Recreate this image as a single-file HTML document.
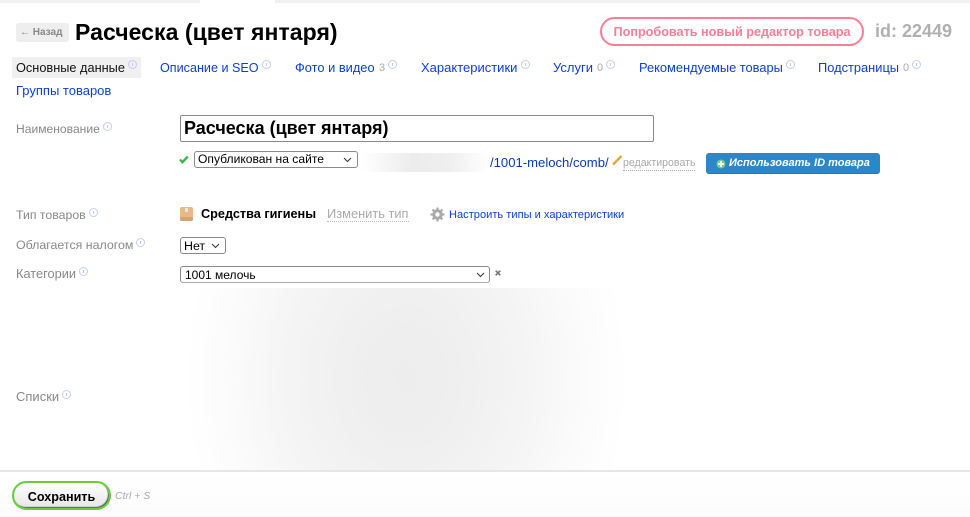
<!DOCTYPE html>
<html lang="ru"><head><meta charset="utf-8"><title>Расческа</title>
<style>
html,body{margin:0;padding:0;background:#fff}
body{width:970px;height:517px;position:relative;overflow:hidden;font-family:"Liberation Sans","Noto Sans CJK SC",sans-serif;color:#000}
.a{position:absolute;white-space:nowrap}
.l{font-size:12.4px;color:#888;line-height:16px}
.t{font-size:12.85px;color:#0b3fd0;line-height:16px}
.n{font-size:11px;color:#aaa;line-height:14px}
.i{position:absolute;border:1px solid #c3cdef;border-radius:50%;box-sizing:border-box;width:9px;height:9px}
.i:after{content:"";position:absolute;left:3px;top:2px;width:1px;height:3px;background:#c3cdef}
.s{position:absolute;box-sizing:border-box;background:#fff;border:1px solid #8a8a8a;border-radius:3px;font-size:12.1px;line-height:16px;white-space:nowrap}
.s svg{position:absolute}
</style></head><body>
<div class="a" style="left:0;top:0;width:970px;height:3px;background:#f0f0f0"></div>
<div class="a" style="left:200px;top:0;width:75px;height:3px;background:#fff"></div>

<div class="a" style="left:16px;top:23px;width:53px;height:19px;background:#eee;border-radius:3px;font-size:10px;font-weight:bold;color:#888;line-height:20px;text-indent:4px"><span style="font-weight:normal">←</span> Назад</div>
<div class="a" style="left:75px;top:17px;font-size:23px;letter-spacing:.06px;font-weight:bold;line-height:30px">Расческа (цвет янтаря)</div>

<div class="a" style="left:600px;top:17px;width:264px;height:29px;box-sizing:border-box;border:2px solid #fb7d96;border-radius:15px;color:#fb7d96;font-size:12.65px;font-weight:bold;line-height:27px;text-align:center">Попробовать новый редактор товара</div>
<div class="a" style="left:875px;top:20px;font-size:18px;font-weight:bold;color:#b0b0b0;line-height:22px">id: 22449</div>

<div class="a" style="left:12px;top:57px;width:129px;height:21px;background:#f0f0f0"></div>
<div class="a" style="left:16px;top:60px;font-size:12.75px;line-height:16px;color:#111">Основные данные</div><i class="i" style="left:128px;top:60px"></i>
<div class="a t" style="left:160px;top:60px;font-size:12.6px">Описание и SEO</div><i class="i" style="left:262px;top:60px"></i>
<div class="a t" style="left:295px;top:60px">Фото и видео</div><div class="a n" style="left:379px;top:61px">3</div><i class="i" style="left:388px;top:60px"></i>
<div class="a t" style="left:421px;top:60px;font-size:13px">Характеристики</div><i class="i" style="left:521px;top:60px"></i>
<div class="a t" style="left:553px;top:60px;font-size:13px">Услуги</div><div class="a n" style="left:597px;top:61px">0</div><i class="i" style="left:606px;top:60px"></i>
<div class="a t" style="left:639px;top:60px">Рекомендуемые товары</div><i class="i" style="left:786px;top:60px"></i>
<div class="a t" style="left:818px;top:60px">Подстраницы</div><div class="a n" style="left:903px;top:61px">0</div><i class="i" style="left:912px;top:60px"></i>
<div class="a t" style="left:16px;top:83px;font-size:13px">Группы товаров</div>

<div class="a l" style="left:16px;top:121px;font-size:12.1px">Наименование</div><i class="i" style="left:103px;top:122px"></i>
<div class="a" style="left:180px;top:115px;width:474px;height:27px;box-sizing:border-box;border:1px solid #8a8a8a;border-radius:2px;font-size:18px;font-weight:bold;line-height:25px;padding-left:3px">Расческа (цвет янтаря)</div>

<svg class="a" style="left:179px;top:155px" width="10" height="9" viewBox="0 0 10 9"><path d="M1 4.5L3.4 7.2L8.8 1.5" fill="none" stroke="#3fb54a" stroke-width="2.4"/></svg>
<div class="s" style="left:194px;top:151px;width:164px;height:17px;line-height:15px;padding-left:3px">Опубликован на сайте<svg style="right:5px;top:5px" width="9" height="6" viewBox="0 0 9 6"><path d="M1 1L4.5 4.5L8 1" fill="none" stroke="#333" stroke-width="1"/></svg></div>
<div class="a" style="left:362px;top:153px;width:126px;height:19px;background:linear-gradient(90deg,#fff,#ececec 40%,#efefef 70%,#fff)"></div>
<div class="a t" style="left:490px;top:155px;font-size:13.1px;color:#0b3aa8">/1001-meloch/comb/</div>
<svg class="a" style="left:612px;top:155px" width="11" height="11" viewBox="0 0 11 11"><path d="M1 9.5L9.5 1" stroke="#e0a93a" stroke-width="2.4"/></svg>
<div class="a" style="left:623px;top:157px;font-size:10.6px;line-height:13px;color:#aaa;border-bottom:1px dotted #aaa">редактировать</div>
<div class="a" style="left:706px;top:153px;width:174px;height:21px;background:#2f86c6;border-radius:3px;border-bottom:1px solid #2a76ae;box-sizing:border-box;color:#fff;font-size:11px;font-weight:bold;font-style:italic;line-height:21px;padding-left:23px">Использовать ID товара</div>
<svg class="a" style="left:716px;top:159px" width="10" height="10" viewBox="0 0 10 10"><circle cx="5" cy="5" r="4.5" fill="#6fd08a"/><path d="M5 2.2V7.8M2.2 5H7.8" stroke="#fff" stroke-width="2"/></svg>

<div class="a l" style="left:16px;top:207px;font-size:12.3px">Тип товаров</div><i class="i" style="left:89px;top:208px"></i>
<svg class="a" style="left:180px;top:207px" width="13" height="14" viewBox="0 0 13 14"><rect x="0" y="0" width="13" height="14" rx="2" fill="#e6b88a"/><rect x="5" y="1" width="3" height="4" fill="#f7e3c8"/><rect y="10" width="13" height="4" rx="1.5" fill="#d9a36f"/></svg>
<div class="a" style="left:201px;top:206px;font-size:12.7px;font-weight:bold;line-height:16px">Средства гигиены</div>
<div class="a" style="left:327px;top:206px;font-size:12.85px;line-height:15px;color:#aaa;border-bottom:1px dotted #bbb">Изменить тип</div>
<svg class="a" style="left:430px;top:207px" width="15" height="15" viewBox="0 0 15 15"><circle cx="7.5" cy="7.5" r="3.7" fill="none" stroke="#aaa" stroke-width="3"/><path d="M7.5 0.5V14.5M0.5 7.5H14.5M2.5 2.5L12.5 12.5M12.5 2.5L2.5 12.5" stroke="#aaa" stroke-width="2.2" stroke-dasharray="3 8 3"/></svg>
<div class="a t" style="left:449px;top:207px;font-size:11.1px">Настроить типы и характеристики</div>

<div class="a l" style="left:16px;top:237px">Облагается налогом</div><i class="i" style="left:136px;top:238px"></i>
<div class="s" style="left:180px;top:237px;width:46px;height:17px;line-height:16px;padding-left:3px;font-size:12.4px">Нет<svg style="right:5px;top:5px" width="9" height="6" viewBox="0 0 9 6"><path d="M1 1L4.5 4.5L8 1" fill="none" stroke="#333" stroke-width="1"/></svg></div>

<div class="a l" style="left:16px;top:266px;font-size:12.8px">Категории</div><i class="i" style="left:79px;top:267px"></i>
<div class="s" style="left:180px;top:266px;width:310px;height:17px;line-height:16px;padding-left:4px;border-bottom-color:#aaa;font-size:12px">1001 мелочь<svg style="right:4px;top:5px" width="9" height="6" viewBox="0 0 9 6"><path d="M1 1L4.5 4.5L8 1" fill="none" stroke="#333" stroke-width="1"/></svg></div>
<svg class="a" style="left:495px;top:270px" width="6" height="6" viewBox="0 0 6 6"><path d="M.7 .7L5.3 5.3M5.3 .7L.7 5.3" stroke="#777" stroke-width="1.7"/></svg>

<div class="a" style="left:172px;top:288px;width:467px;height:183px;background:radial-gradient(ellipse 233px 300px at 234px 90px,#ededed 0,#efefef 22%,#f4f4f4 50%,#fbfbfb 76%,#fff 95%)"></div>
<div class="a l" style="left:16px;top:389px;font-size:13px">Списки</div><i class="i" style="left:62px;top:390px"></i>

<div class="a" style="left:0;top:470px;width:970px;height:47px;background:linear-gradient(#fff,#fcfcfc);border-top:2px solid #e6e6e6;box-sizing:border-box"></div>
<div class="a" style="left:12px;top:481px;width:99px;height:29px;box-sizing:border-box;border:2px solid #66cc3c;border-radius:15px;background:linear-gradient(#fff,#e6e6e6);box-shadow:inset -1px -1px 1px #555;font-size:12.6px;font-weight:bold;line-height:28px;text-align:center">Сохранить</div>
<div class="a" style="left:115px;top:490px;font-size:10.5px;font-style:italic;color:#aaa;line-height:13px">Ctrl + S</div>
</body></html>
